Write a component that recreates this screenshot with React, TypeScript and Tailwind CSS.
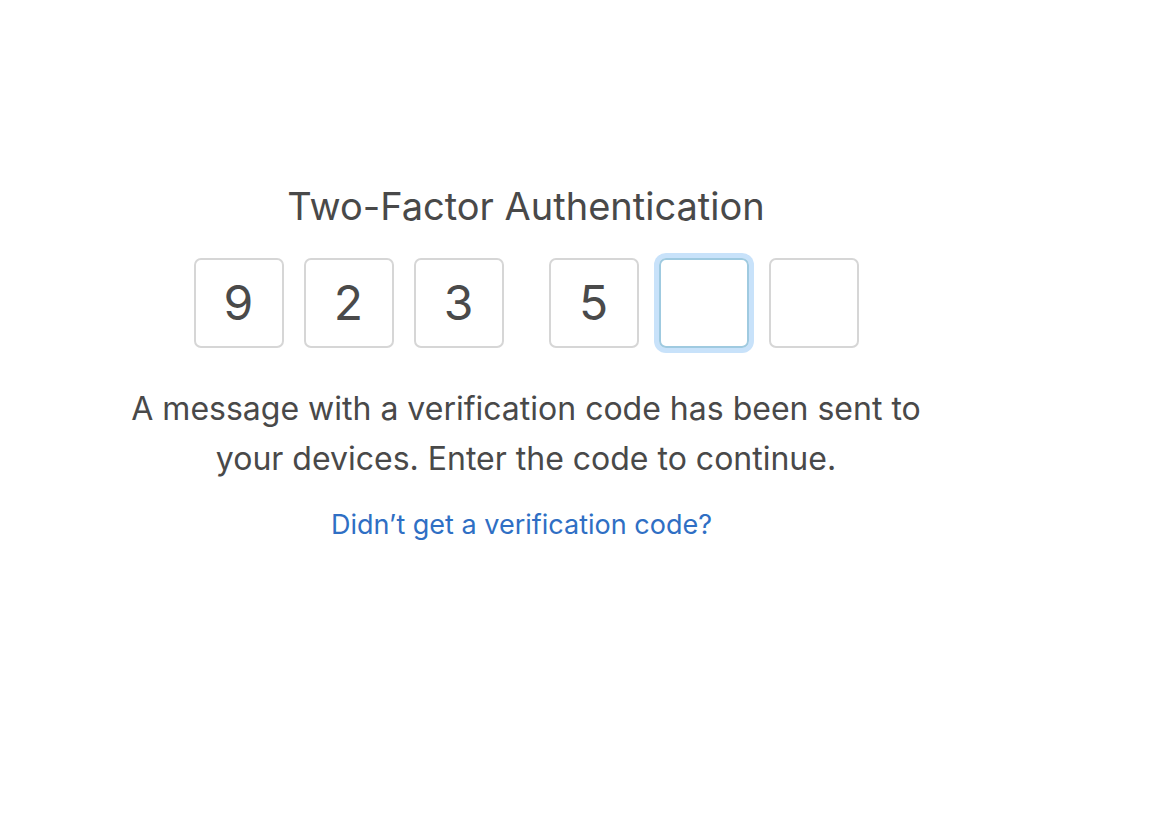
import React from "react";

const digits = ["9", "2", "3", "5", "", ""];

const CodeBox = ({ value, focused }: { value: string; focused?: boolean }) => (
  <div
    className={
      focused
        ? "w-[90px] h-[90px] rounded-[7px] border-2 border-[#9fcae0] ring-[5px] ring-[#c8e2fa] flex items-center justify-center"
        : "w-[90px] h-[90px] rounded-[7px] border-2 border-[#d6d6d6] flex items-center justify-center"
    }
  >
    <span className="text-[48px] text-[#4a4a4a] leading-none">{value}</span>
  </div>
);

export default function App() {
  return (
    <div className="w-[1170px] h-[832px] bg-white" style={{ fontFamily: "Inter, sans-serif" }}>
      <div className="w-[1052px] flex flex-col items-center pt-[182px] text-[#494949]">
        <h1 className="text-[38px] leading-[48px]">Two-Factor Authentication</h1>
        <div className="flex mt-[28px]">
          <div className="flex gap-[20px]">
            {digits.slice(0, 3).map((d, i) => (
              <CodeBox key={i} value={d} />
            ))}
          </div>
          <div className="flex gap-[20px] ml-[45px]">
            {digits.slice(3).map((d, i) => (
              <CodeBox key={i} value={d} focused={i === 1} />
            ))}
          </div>
        </div>
        <p className="mt-[36px] text-[32px] leading-[50px] text-center">
          A message with a verification code has been sent to
          <br />
          your devices. Enter the code to continue.
        </p>
        <a href="#" className="mt-[25px] mr-[9px] text-[27px] leading-[32px] text-[#2f6fc4]">
          Didn’t get a verification code?
        </a>
      </div>
    </div>
  );
}
